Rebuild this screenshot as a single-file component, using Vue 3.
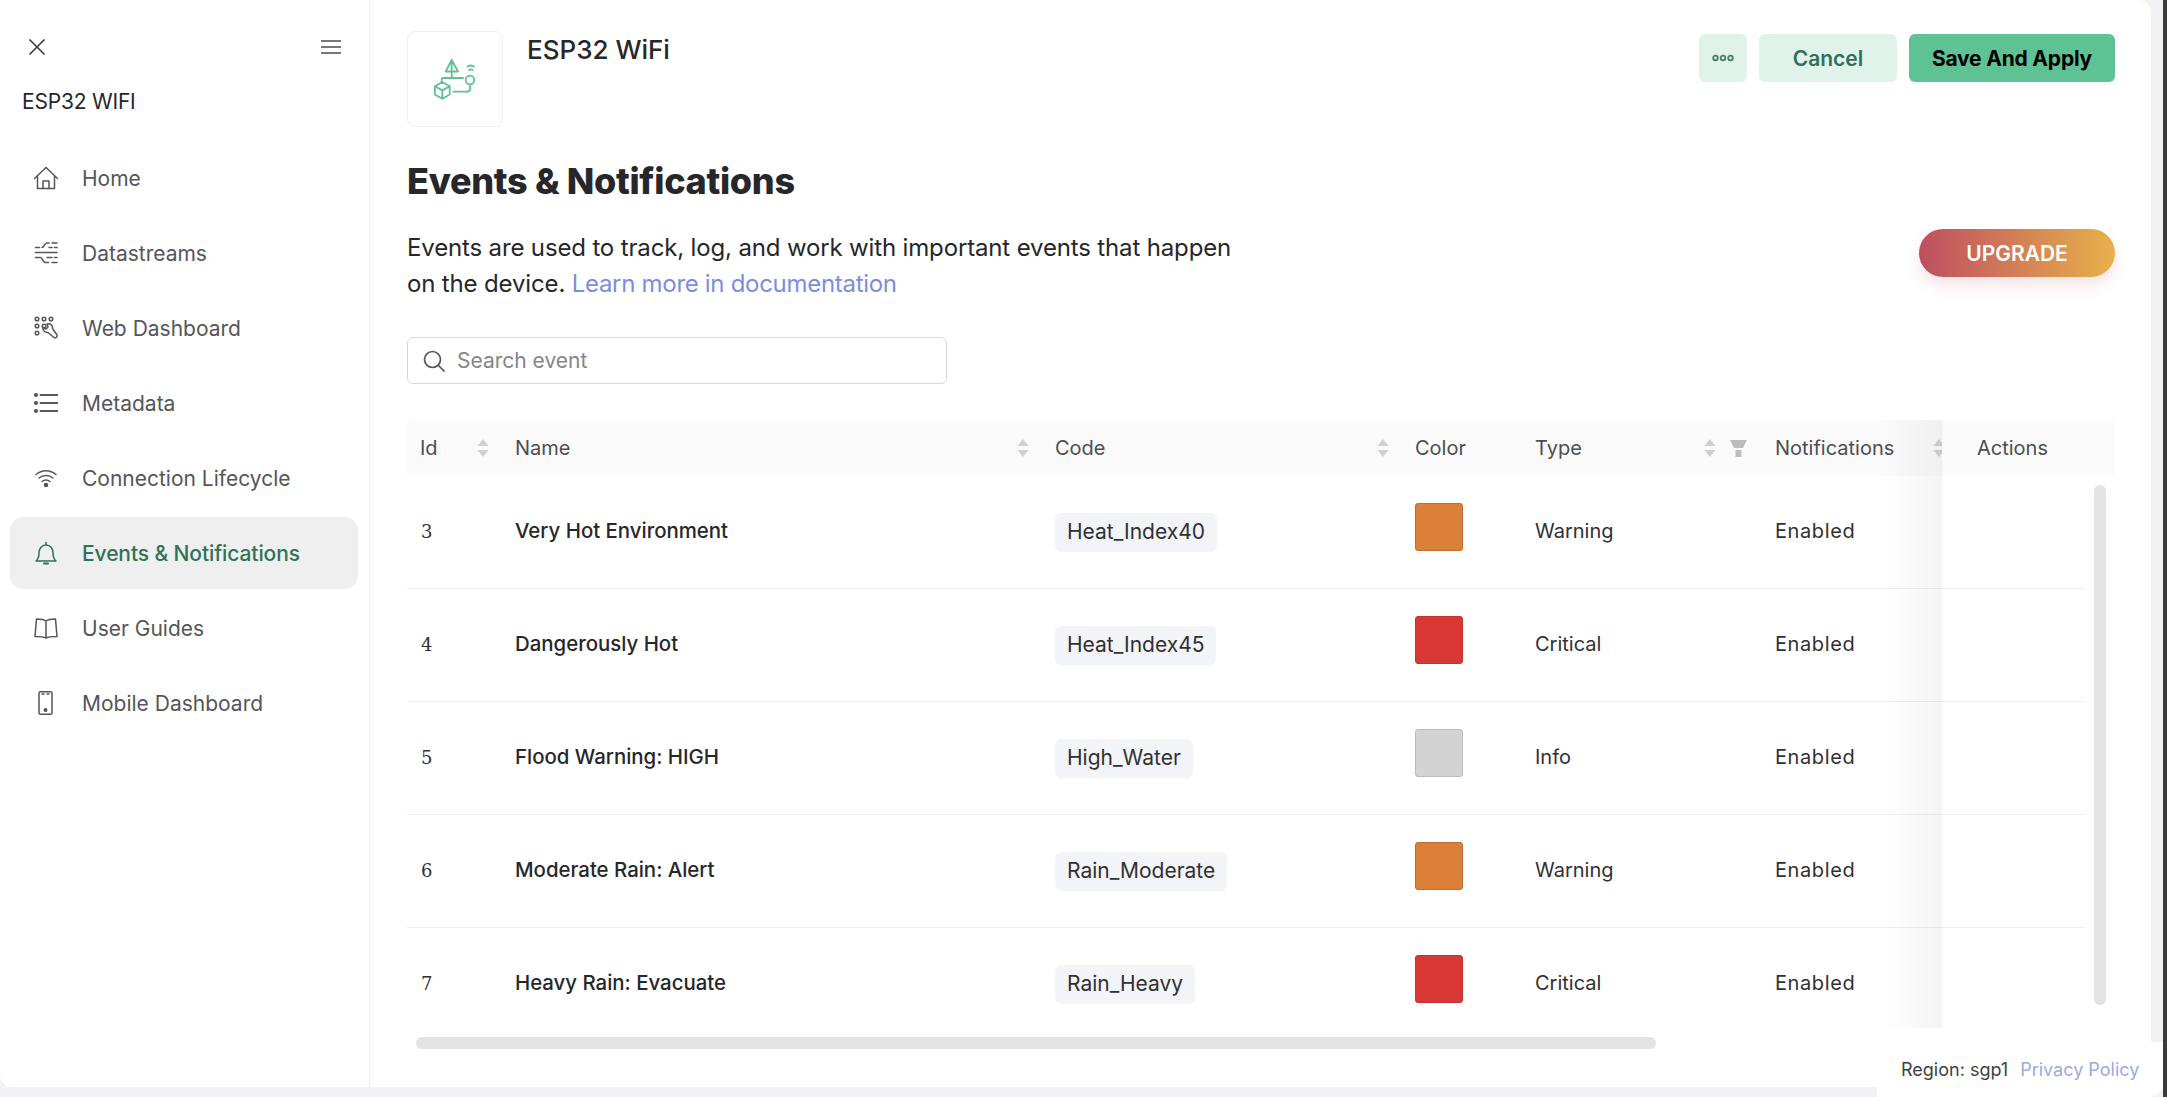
<template>
  <div class="page">
    <div class="card">
      <aside class="sidebar">
        <div class="side-top">
          <svg class="close" width="18" height="18" viewBox="0 0 18 18" fill="none" stroke="#3a3a40" stroke-width="1.6"><path d="M1.5 1.5l15 15M16.500 1.500l-15 15"/></svg>
          <svg class="burger" width="20" height="14" viewBox="0 0 20 14" fill="none" stroke="#4a4a50" stroke-width="1.6"><path d="M0 1h20M0 7h20M0 13h20"/></svg>
        </div>
        <div class="brand">ESP32 WIFI</div>
        <nav class="nav">
          <div v-for="item in navItems" :key="item.label" class="nav-item" :class="{ active: item.active }">
            <svg class="nav-icon" width="24" height="24" viewBox="0 0 24 24" fill="none" stroke="currentColor" stroke-width="1.5" stroke-linecap="round" stroke-linejoin="round">
              <g v-if="item.icon === 'home'"><path d="M0.500 12.500L12 1.500l11.500 11"/><path d="M3.500 10.500V22.500h17V10.500"/><path d="M9 22.500v-7.500h6v7.500"/></g>
              <g v-else-if="item.icon === 'streams'"><path d="M1.500 6.500h4M8 6.500c2.500 0 2-4.500 5-4.500h2M18 2h5M15 6.500h3M20.500 6.500h2.500"/><path d="M1.500 11.500H23"/><path d="M1.500 16.500h5c2.500 0 2 5 5 5h3M13 16.500h5M20.500 16.500h2.500M18 21.500h5"/></g>
              <g v-else-if="item.icon === 'web'"><circle cx="3" cy="3" r="1.800"/><circle cx="10" cy="3" r="1.800"/><circle cx="17" cy="3" r="1.800"/><circle cx="3" cy="10" r="1.800"/><circle cx="3" cy="17" r="1.800"/><circle cx="10" cy="10" r="1.800"/><path d="M13 8c3-1 6 1 5.500 4.500L23 19c.5 1.500-1 3.500-3 2.500l-6-5c-3 .5-5.500-2-5-5l3 1.500 2-2z"/></g>
              <g v-else-if="item.icon === 'list'"><circle cx="2" cy="4" r="1.300" fill="currentColor"/><circle cx="2" cy="12" r="1.300" fill="currentColor"/><circle cx="2" cy="20" r="1.300" fill="currentColor"/><path d="M6.500 4h17M6.500 12h17M6.500 20h17" stroke-width="1.800"/></g>
              <g v-else-if="item.icon === 'wifi'"><path d="M2 8.500c6-5 14-5 20 0M5 12c4-3.300 10-3.300 14 0M8 15.500c2.500-2 5.500-2 8 0"/><circle cx="12" cy="19" r="1.500" fill="currentColor"/></g>
              <g v-else-if="item.icon === 'bell'"><path d="M2 20c2.500-2 3-4 3-8 0-4 2.500-8 7-8s7 4 7 8c0 4 .5 6 3 8z"/><path d="M12 1.500V4"/><path d="M10 22.500h4" stroke-width="2"/></g>
              <g v-else-if="item.icon === 'book'"><path d="M12 5c-2-1.500-5-2-9.500-2L1 20.500c4.500 0 8.500 0 11 1.500 2.500-1.500 6.500-1.500 11-1.500L21.500 3C17 3 14 3.500 12 5zM12 5v17"/></g>
              <g v-else><rect x="5" y="0.800" width="13" height="22.400" rx="1.500"/><path d="M8 3h2M13 3h2"/><circle cx="11.500" cy="19" r="1.200" fill="currentColor"/></g>
            </svg>
            <span>{{ item.label }}</span>
          </div>
        </nav>
      </aside>

      <main class="main">
        <div class="top-row">
          <div class="logo-box">
            <svg width="60" height="60" viewBox="0 0 60 60" fill="none" stroke="#5fc294" stroke-width="1.800" stroke-linecap="round" stroke-linejoin="round">
              <path d="M26.700 11L33 22.500H20.700zM26.700 11V22.500M26.700 22.500V29"/>
              <path d="M42.500 17.500c2-1.200 4.500-1.200 6.500 0M44 21c1.100-.7 2.500-.7 3.600 0"/>
              <circle cx="45" cy="31" r="4.300"/>
              <path d="M16.700 33v-2.500c0-1 .5-1.500 1.500-1.500H38"/>
              <path d="M17.300 33l7.400 4.200v8.300l-7.400 4.200-7.400-4.200v-8.300zM9.900 37.200l7.400 4.200 7.400-4.200M17.300 41.400v8.300"/>
              <path d="M28.500 42.700h13c1.800 0 3.500-1 3.500-3v-3"/>
            </svg>
          </div>
          <div class="device-name">ESP32 WiFi</div>
          <div class="actions">
            <button class="btn btn-more">
              <svg width="22" height="8" viewBox="0 0 22 8" fill="none" stroke="#4a7d68" stroke-width="1.800"><circle cx="3.500" cy="4" r="2.300"/><circle cx="11" cy="4" r="2.300"/><circle cx="18.500" cy="4" r="2.300"/></svg>
            </button>
            <button class="btn btn-cancel">Cancel</button>
            <button class="btn btn-save">Save And Apply</button>
          </div>
        </div>

        <h1 class="heading">Events &amp; Notifications</h1>

        <div class="intro-row">
          <p class="intro">Events are used to track, log, and work with important events that happen on the device. <a class="link">Learn more in documentation</a></p>
          <button class="upgrade">UPGRADE</button>
        </div>

        <div class="search">
          <svg width="22" height="22" viewBox="0 0 22 22" fill="none" stroke="#55555a" stroke-width="1.700" stroke-linecap="round"><circle cx="9.500" cy="9.500" r="8"/><path d="M15.500 15.500l5.500 5.500"/></svg>
          <span>Search event</span>
        </div>

        <div class="table">
          <div class="thead">
            <div v-for="col in columns" :key="col.label" class="th">
              <span>{{ col.label }}</span>
              <svg v-if="col.sort" class="sort" :class="{ 'with-filter': col.filter }" width="12" height="18" viewBox="0 0 12 18" fill="#d0d0d0"><path d="M6 0l5.500 7H.5zM6 18l5.500-7H.5z"/></svg>
              <svg v-if="col.filter" class="filter" width="17" height="18" viewBox="0 0 17 18" fill="#bdbdbd"><path d="M0 1h17l-4 8H4zM5.500 11h6v7h-6z"/></svg>
            </div>
          </div>
          <div v-for="row in rows" :key="row.id" class="tr">
            <div class="td td-id">{{ row.id }}</div>
            <div class="td td-name">{{ row.name }}</div>
            <div class="td td-code"><span class="tag">{{ row.code }}</span></div>
            <div class="td td-code"><span class="swatch" :style="{ background: typeColors[row.type].fill, borderColor: typeColors[row.type].edge }"></span></div>
            <div class="td">{{ row.type }}</div>
            <div class="td td-status">Enabled</div>
          </div>
          <div class="fixed-shadow"></div>
          <div class="fixed-head">Actions</div>
        </div>

        <div class="scroll-y"></div>
        <div class="scroll-x"></div>
      </main>
    </div>
    <div class="gutter"></div>
    <div class="frame"></div>
    <div class="footer">
      <span>Region: sgp1</span>
      <a class="footer-link">Privacy Policy</a>
    </div>
  </div>
</template>

<script setup>
const navItems = [
  { label: 'Home', icon: 'home' },
  { label: 'Datastreams', icon: 'streams' },
  { label: 'Web Dashboard', icon: 'web' },
  { label: 'Metadata', icon: 'list' },
  { label: 'Connection Lifecycle', icon: 'wifi' },
  { label: 'Events & Notifications', icon: 'bell', active: true },
  { label: 'User Guides', icon: 'book' },
  { label: 'Mobile Dashboard', icon: 'phone' }
]

const columns = [
  { label: 'Id', sort: true },
  { label: 'Name', sort: true },
  { label: 'Code', sort: true },
  { label: 'Color' },
  { label: 'Type', sort: true, filter: true },
  { label: 'Notifications', sort: true }
]

const typeColors = {
  Warning: { fill: '#dc8039', edge: '#bd6d30' },
  Critical: { fill: '#d83733', edge: '#c23330' },
  Info: { fill: '#d3d3d3', edge: '#bcbcbc' }
}

const rows = [
  { id: 3, name: 'Very Hot Environment', code: 'Heat_Index40', type: 'Warning' },
  { id: 4, name: 'Dangerously Hot', code: 'Heat_Index45', type: 'Critical' },
  { id: 5, name: 'Flood Warning: HIGH', code: 'High_Water', type: 'Info' },
  { id: 6, name: 'Moderate Rain: Alert', code: 'Rain_Moderate', type: 'Warning' },
  { id: 7, name: 'Heavy Rain: Evacuate', code: 'Rain_Heavy', type: 'Critical' }
]
</script>

<style>
html, body {
  margin: 0;
  overflow: hidden;
}
</style>

<style scoped>
.page {
  position: relative;
  display: flex;
  width: 2167px;
  height: 1097px;
  overflow: hidden;
  background: #f1f2f6;
  font-family: Inter, "Liberation Sans", sans-serif;
  color: #26262b;
}

.card {
  display: flex;
  width: 2151px;
  height: 1087px;
  background: #fff;
  border-radius: 0 12px 0 12px;
}

.gutter {
  width: 12px;
}

.frame {
  width: 4px;
  background: #3a3a3a;
}

.sidebar {
  width: 370px;
  flex: none;
  box-sizing: border-box;
  padding: 36px 0 0 10px;
  border-right: 1px solid #eeeeee;
}

.side-top {
  display: flex;
  justify-content: space-between;
  align-items: center;
  height: 22px;
  padding: 0 28px 0 18px;
}

.brand {
  margin: 30px 0 0 12px;
  font-size: 21px;
  line-height: 28px;
  letter-spacing: -0.2px;
  color: #26262b;
}

.nav {
  margin-top: 26px;
  display: flex;
  flex-direction: column;
  gap: 3px;
}

.nav-item {
  display: flex;
  align-items: center;
  gap: 24px;
  width: 348px;
  height: 72px;
  box-sizing: border-box;
  padding-left: 24px;
  border-radius: 14px;
  font-size: 21px;
  color: #55555b;
}

.nav-item.active {
  background: #efefef;
  color: #2e7358;
  font-weight: 500;
  letter-spacing: -0.1px;
}

.main {
  position: relative;
  flex: 1;
  min-width: 0;
  box-sizing: border-box;
  padding: 31px 36px 0 37px;
}

.top-row {
  display: flex;
  height: 96px;
}

.logo-box {
  display: flex;
  align-items: center;
  justify-content: center;
  width: 96px;
  height: 96px;
  box-sizing: border-box;
  border: 1px solid #efefef;
  border-radius: 8px;
}

.device-name {
  margin: 3px 0 0 24px;
  font-size: 26px;
  line-height: 32px;
  font-weight: 500;
}

.actions {
  display: flex;
  gap: 12px;
  height: 48px;
  margin: 3px 0 0 auto;
}

.btn {
  height: 48px;
  padding: 0;
  border: 0;
  border-radius: 6px;
  font-family: inherit;
  font-size: 21px;
  font-weight: 600;
  display: flex;
  align-items: center;
  justify-content: center;
}

.btn-more {
  width: 48px;
  background: #e0f3ea;
}

.btn-cancel {
  width: 138px;
  background: #e0f3ea;
  color: #33705a;
}

.btn-save {
  width: 206px;
  background: #5ec294;
  color: #000;
  font-weight: 700;
  letter-spacing: -0.2px;
}

.heading {
  margin: 32px 0 0;
  font-size: 36px;
  line-height: 44px;
  font-weight: 800;
  letter-spacing: -0.3px;
}

.intro-row {
  display: flex;
  justify-content: space-between;
  margin-top: 27px;
}

.intro {
  width: 840px;
  margin: 0;
  font-size: 24px;
  line-height: 36px;
  letter-spacing: -0.15px;
}

.link {
  color: #7b8edd;
  letter-spacing: -0.3px;
}

.upgrade {
  width: 196px;
  height: 48px;
  margin-top: -1px;
  border: 0;
  border-radius: 24px;
  background: linear-gradient(90deg, #bd4f60, #e8b14a);
  box-shadow: 0 8px 16px rgba(190, 80, 96, 0.16);
  color: #fff;
  font-family: inherit;
  font-size: 21px;
  font-weight: 600;
}

.search {
  display: flex;
  align-items: center;
  gap: 12px;
  width: 540px;
  height: 47px;
  margin-top: 35px;
  box-sizing: border-box;
  padding-left: 15px;
  border: 1px solid #d9d9d9;
  border-radius: 6px;
  font-size: 21px;
  color: #85858a;
}

.table {
  position: relative;
  height: 608px;
  margin-top: 36px;
  overflow: hidden;
}

.thead {
  display: grid;
  grid-template-columns: 95px 540px 360px 120px 240px 196px;
  height: 56px;
  background: #fafafa;
  border-radius: 6px 6px 0 0;
}

.th {
  position: relative;
  display: flex;
  align-items: center;
  padding-left: 13px;
  font-size: 20px;
  color: #4d4d53;
}

.sort {
  position: absolute;
  right: 13px;
  top: 19px;
}

.sort.with-filter {
  right: 46px;
}

.filter {
  position: absolute;
  right: 15px;
  top: 19px;
}

.tr {
  display: grid;
  grid-template-columns: 95px 540px 360px 120px 240px 223px;
  width: 1678px;
  height: 113px;
  box-sizing: border-box;
  border-bottom: 1px solid #eeeeee;
}

.td {
  display: flex;
  align-items: center;
  padding: 0 0 2px 13px;
  font-size: 20px;
  color: #303035;
}

.td-id {
  padding: 0 0 1px 14px;
  font-family: "DejaVu Serif", serif;
  font-size: 18px;
}

.td-name {
  padding-bottom: 3px;
  font-size: 20.4px;
  font-weight: 500;
  color: #26262b;
}

.td-code {
  padding-bottom: 0;
  font-size: 21px;
}

.td-status {
  letter-spacing: 0.6px;
}

.tag {
  padding: 0 12px;
  height: 39px;
  line-height: 38px;
  background: #f3f4f8;
  border-radius: 6px;
}

.swatch {
  width: 48px;
  height: 48px;
  box-sizing: border-box;
  margin-top: -11px;
  border: 1px solid;
  border-radius: 3px;
}

.fixed-shadow {
  position: absolute;
  top: 0;
  bottom: 0;
  right: 173px;
  width: 60px;
  background: linear-gradient(90deg, rgba(0, 0, 0, 0), rgba(0, 0, 0, 0.045));
  pointer-events: none;
}

.fixed-head {
  position: absolute;
  top: 0;
  right: 0;
  width: 173px;
  height: 56px;
  box-sizing: border-box;
  padding-left: 35px;
  background: #fafafa;
  border-radius: 0 6px 0 0;
  font-size: 20px;
  line-height: 56px;
  color: #4d4d53;
}

.scroll-y {
  position: absolute;
  left: 1724px;
  top: 485px;
  width: 12px;
  height: 520px;
  background: #e3e3e3;
  border-radius: 6px;
}

.scroll-x {
  position: absolute;
  left: 46px;
  top: 1037px;
  width: 1240px;
  height: 12px;
  background: #e3e3e3;
  border-radius: 6px;
}

.footer {
  position: absolute;
  right: 4px;
  bottom: 0;
  display: flex;
  align-items: center;
  gap: 12px;
  width: 286px;
  height: 55px;
  box-sizing: border-box;
  padding: 0 0 0 24px;
  background: #fefffe;
  border-radius: 0 0 14px 0;
  font-size: 18px;
  color: #3f3f44;
}

.footer-link {
  color: #9aaae6;
}
</style>
